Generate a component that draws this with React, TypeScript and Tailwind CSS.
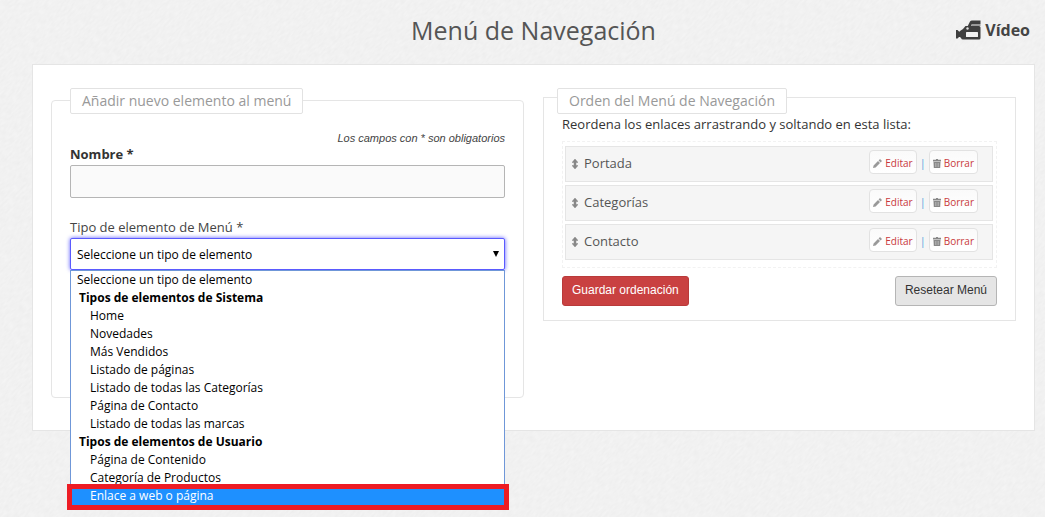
import { useState } from "react";

interface MenuOption {
  label: string;
  kind: "empty" | "group" | "option";
}

const menuOptions: MenuOption[] = [
  { label: "Seleccione un tipo de elemento", kind: "empty" },
  { label: "Tipos de elementos de Sistema", kind: "group" },
  { label: "Home", kind: "option" },
  { label: "Novedades", kind: "option" },
  { label: "Más Vendidos", kind: "option" },
  { label: "Listado de páginas", kind: "option" },
  { label: "Listado de todas las Categorías", kind: "option" },
  { label: "Página de Contacto", kind: "option" },
  { label: "Listado de todas las marcas", kind: "option" },
  { label: "Tipos de elementos de Usuario", kind: "group" },
  { label: "Página de Contenido", kind: "option" },
  { label: "Categoría de Productos", kind: "option" },
  { label: "Enlace a web o página", kind: "option" },
];

const optionClasses = {
  empty: "pl-[6px]",
  group: "pl-2 font-bold",
  option: "pl-[19px]",
};

const menuLinks = ["Portada", "Categorías", "Contacto"];

function PaperBackground() {
  return (
    <svg className="absolute inset-0 -z-10 h-full w-full" aria-hidden="true">
      <filter id="paper" x="0" y="0" width="100%" height="100%" colorInterpolationFilters="sRGB">
        <feTurbulence type="fractalNoise" baseFrequency="0.16 0.5" numOctaves="2" seed="4" />
        <feColorMatrix values="0.04 0 0 0 0.925  0.04 0 0 0 0.925  0.04 0 0 0 0.925  0 0 0 0 1" />
      </filter>
      <g transform="rotate(-45)">
        <rect x="-1600" y="-800" width="4200" height="3600" filter="url(#paper)" />
      </g>
    </svg>
  );
}

function VideoIcon() {
  return (
    <svg width="25" height="20" viewBox="0 0 25 20" fill="#3f3f3f" aria-hidden="true">
      {/* lens */}
      <path d="M0 10h1.500l1.500 1.500h1V17H3l-1.500 1.500H0z" />
      {/* body */}
      <path d="M4 11l3-2 2.500-3H23q1.500 0 1.500 1.500v10.500q0 1.500-1.500 1.500H7Q5.500 19.500 5 18L4 17z" />
      {/* handle */}
      <path d="M11.500 6.500L14 1.500Q14.700.500 16 .500h8.500V4H16l-1.500 3h-3z" />
      <path d="M16 4h8.500v2H15z" fill="#9a9a9a" />
      <rect x="10" y="12" width="12" height="5" rx=".5" fill="#f2f2f2" />
      <circle cx="11.500" cy="8.500" r="1.200" fill="#e0e0e0" />
    </svg>
  );
}

function MoveIcon() {
  return (
    <svg width="6" height="10" viewBox="0 0 6 10" fill="#888" aria-hidden="true">
      <path d="M3 0l3 3.500H4v3h2L3 10 0 6.500h2v-3H0z" stroke="#888" strokeWidth=".5" />
    </svg>
  );
}

function PencilIcon() {
  return (
    <svg width="9" height="9" viewBox="0 0 9 9" fill="#999" aria-hidden="true">
      <path d="M0 9l.6-2.6L5 2l2 2-4.400 4.400zM5.600 1.400L7 0l2 2-1.400 1.400z" />
    </svg>
  );
}

function TrashIcon() {
  return (
    <svg width="8" height="9" viewBox="0 0 8 9" aria-hidden="true">
      <path fill="#888" d="M3 0h2v.800h3v1.600H0V.800h3zM.500 3h7L7.200 9H.800z" />
      <path stroke="#ccc" strokeWidth=".5" d="M2.500 4v4M4 4v4M5.500 4v4" />
    </svg>
  );
}

const smallButton =
  "flex h-6 items-center gap-[3px] rounded border border-[#e2e2e2] bg-gradient-to-b from-[#fafafa] to-white px-[3px] pt-[2px] text-[10px] text-[#c9393b]";

function SortableItem({ name }: { name: string }) {
  return (
    <li className="flex h-9 items-center border border-[#e5e5e5] bg-[#f5f5f5] pr-[14px] pl-[6px] text-[13px] text-[#555]">
      <MoveIcon />
      <span className="ml-[6px] flex-1">{name}</span>
      <div className="-mt-1 flex items-center">
        <button type="button" className={smallButton}>
          <PencilIcon />
          Editar
        </button>
        <span className="w-3 pt-[2px] text-center text-[10px] text-[#3a9bdc]">|</span>
        <button type="button" className={smallButton}>
          <TrashIcon />
          Borrar
        </button>
      </div>
    </li>
  );
}

const legendClasses =
  "float-left rounded-xs border border-[#e2e2e2] bg-white px-[11px] text-[14px] leading-6 text-[#999]";

function App() {
  const [name, setName] = useState<string>("");
  const [selected, setSelected] = useState<string>(menuOptions[0].label);

  return (
    <div className="relative isolate min-h-screen overflow-hidden bg-[#f2f2f2] pr-[10px] pl-8 font-['Open_Sans',sans-serif] text-[13px] text-[#333]">
      <PaperBackground />
      <header className="grid h-16 grid-cols-[1fr_auto_1fr] items-center">
        <h1 className="col-start-2 -mt-1 text-[25px] leading-8 text-[#555]">Menú de Navegación</h1>
        <a
          href="#video"
          className="-mt-1 mr-[5px] flex items-center gap-1 justify-self-end text-[16px] font-bold text-[#444]"
        >
          <VideoIcon />
          Vídeo
        </a>
      </header>

      <main className="grid grid-cols-2 items-start gap-[19px] border border-[#e5e5e5] bg-white px-[18px] py-8">
        <form onSubmit={event => event.preventDefault()}>
          <fieldset className="mt-[3px] rounded border border-[#e5e5e5] px-[18px] pb-[127px]">
            <legend className={`${legendClasses} -mt-[13px]`}>Añadir nuevo elemento al menú</legend>
            <p className="clear-both pt-4 text-right font-['Liberation_Sans',sans-serif] text-[11px] leading-4 text-[#444] italic">
              Los campos con * son obligatorios
            </p>
            <label htmlFor="name" className="block leading-4 font-bold">
              Nombre *
            </label>
            <input
              id="name"
              type="text"
              value={name}
              onChange={event => setName(event.target.value)}
              className="mt-[3px] block h-[33px] w-full rounded-xs border border-[#b5b5b5] bg-[#fafafa] px-2"
            />
            <label htmlFor="type" className="mt-[19px] mb-px block leading-5 text-[#444]">
              Tipo de elemento de Menú *
            </label>
            <div className="relative">
              <select
                id="type"
                value={selected}
                onChange={event => setSelected(event.target.value)}
                className="block h-8 w-full appearance-none rounded-xs border border-[#5a5aff] bg-white px-[6px] pt-[2px] text-[12px] text-black shadow-[0_0_4px_#5a5aff] outline-none"
              >
                {menuOptions
                  .filter(option => option.kind !== "group")
                  .map(option => (
                    <option key={option.label}>{option.label}</option>
                  ))}
              </select>
              <svg
                className="pointer-events-none absolute top-[13px] right-[6px]"
                width="6"
                height="6"
                viewBox="0 0 6 6"
                aria-hidden="true"
              >
                <path d="M0 0h6L3 6z" />
              </svg>
              {/* open list of the select */}
              <ul
                role="listbox"
                aria-label="Tipo de elemento de Menú"
                className="absolute top-full z-10 w-full border border-[#6f97d8] bg-white text-[12px] leading-[18px] text-black"
              >
                {menuOptions.map(option => {
                  const isActive = option.label === "Enlace a web o página";
                  return (
                    <li
                      key={option.label}
                      role={option.kind === "group" ? "presentation" : "option"}
                      aria-selected={option.kind === "group" ? undefined : isActive}
                      className={`relative ${optionClasses[option.kind]} ${isActive ? "bg-[#1e90ff] text-white" : ""}`}
                      onClick={() => option.kind !== "group" && setSelected(option.label)}
                    >
                      {option.label}
                      {isActive && (
                        <span className="absolute -top-[3px] -right-[5px] -bottom-[5px] -left-1 border-5 border-[#ed1c24]" />
                      )}
                    </li>
                  );
                })}
              </ul>
            </div>
          </fieldset>
        </form>

        <form onSubmit={event => event.preventDefault()}>
          <fieldset className="border border-[#e5e5e5] px-[18px] pb-[14px]">
            <legend className={`${legendClasses} -mt-[10px] -ml-[5px]`}>Orden del Menú de Navegación</legend>
            <p className="clear-both leading-5">Reordena los enlaces arrastrando y soltando en esta lista:</p>
            <ul className="mt-[7px] flex flex-col gap-[3px] border border-dashed border-[#f2f2f2] pt-1 pr-[3px] pb-[7px] pl-[2px]">
              {menuLinks.map(link => (
                <SortableItem key={link} name={link} />
              ))}
            </ul>
            <div className="mt-2 flex justify-between font-['Liberation_Sans',sans-serif] text-[12px]">
              <button
                type="submit"
                className="h-[30px] rounded-[3px] border border-[#b93a3a] bg-[#c94141] px-[9px] pb-[2px] text-white"
              >
                Guardar ordenación
              </button>
              <button
                type="button"
                className="h-[30px] rounded-[3px] border border-[#b5b5b5] bg-[#e5e5e5] px-[9px] pb-[2px] text-[#333]"
              >
                Resetear Menú
              </button>
            </div>
          </fieldset>
        </form>
      </main>
    </div>
  );
}

export default App;
